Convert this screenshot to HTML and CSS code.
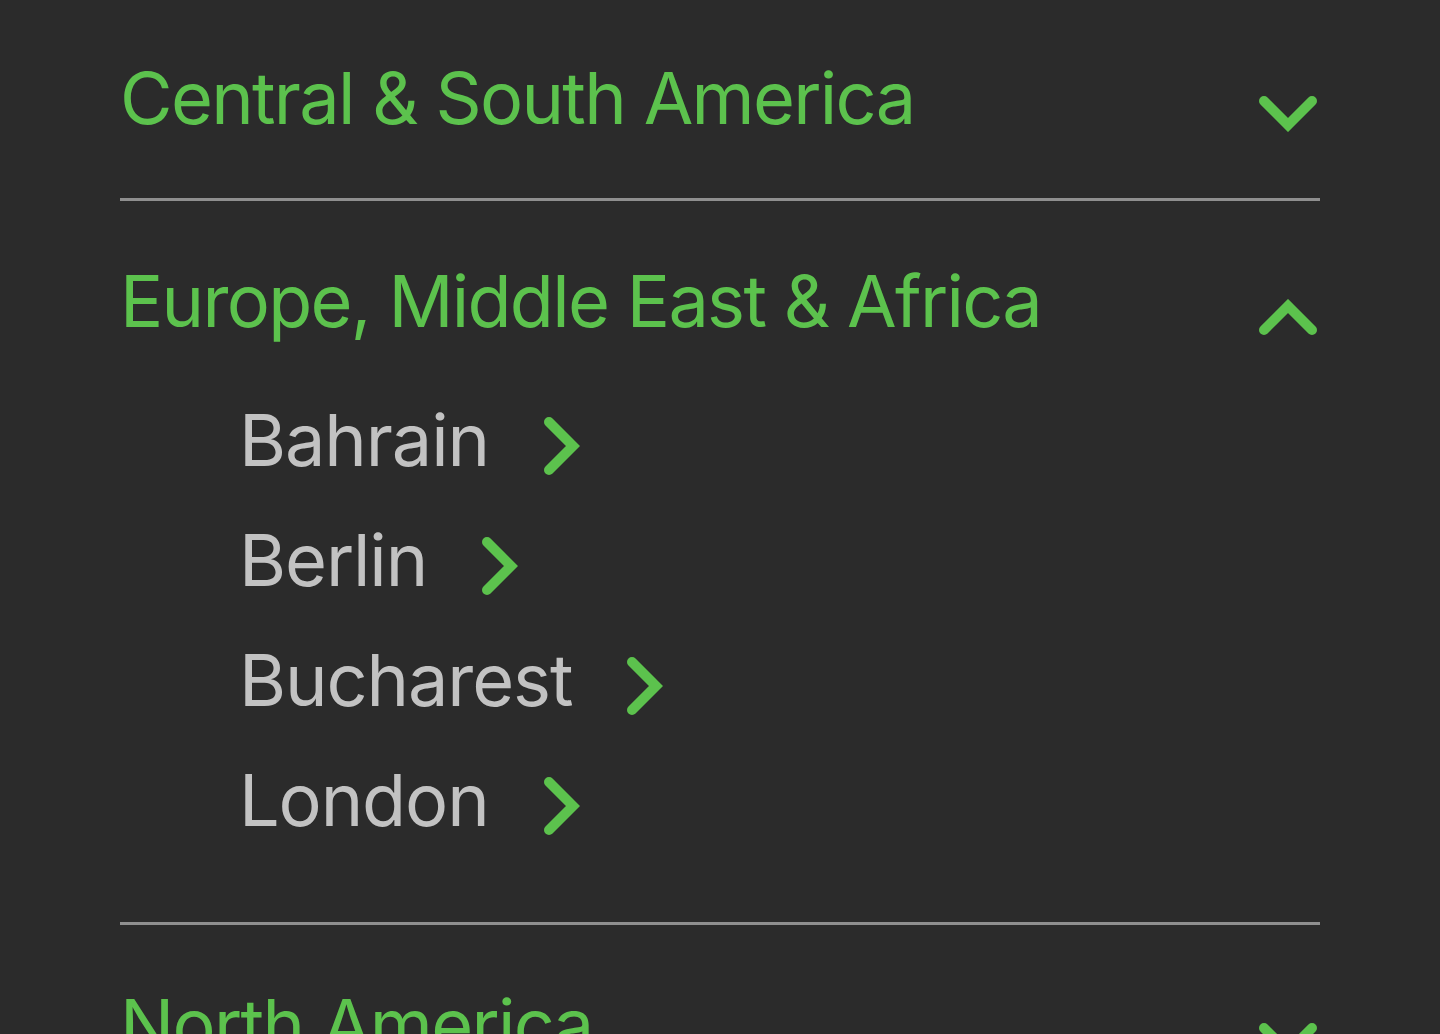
FILE: index.html
```html
<!DOCTYPE html>
<html lang="en">
<head>
<meta charset="utf-8">
<title>Locations</title>
<link rel="stylesheet" href="styles.css">
</head>
<body>
<main class="accordion">
  <section class="region">
    <div class="region-head">
      <h2 class="region-title">Central &amp; South America</h2>
      <svg class="toggle" viewBox="0 0 58 36" width="58" height="36"><polyline points="5,5 29,29 53,5"/></svg>
    </div>
  </section>
  <section class="region open">
    <div class="region-head">
      <h2 class="region-title">Europe, Middle East &amp; Africa</h2>
      <svg class="toggle" viewBox="0 0 58 36" width="58" height="36"><polyline points="5,31 29,7 53,31"/></svg>
    </div>
    <ul class="cities">
      <li class="city"><span class="city-name">Bahrain</span><svg class="go" viewBox="0 0 36 58" width="36" height="58"><polyline points="5,5 29,29 5,53"/></svg></li>
      <li class="city"><span class="city-name">Berlin</span><svg class="go" viewBox="0 0 36 58" width="36" height="58"><polyline points="5,5 29,29 5,53"/></svg></li>
      <li class="city"><span class="city-name">Bucharest</span><svg class="go" viewBox="0 0 36 58" width="36" height="58"><polyline points="5,5 29,29 5,53"/></svg></li>
      <li class="city"><span class="city-name">London</span><svg class="go" viewBox="0 0 36 58" width="36" height="58"><polyline points="5,5 29,29 5,53"/></svg></li>
    </ul>
  </section>
  <section class="region">
    <div class="region-head">
      <h2 class="region-title">North America</h2>
      <svg class="toggle" viewBox="0 0 58 36" width="58" height="36"><polyline points="5,5 29,29 53,5"/></svg>
    </div>
  </section>
</main>
</body>
</html>
```

FILE: styles.css
```css
html, body {
  margin: 0;
  padding: 0;
  background: #2b2b2b;
  height: 100%;
  overflow: hidden;
}

body {
  font-family: Inter, "Noto Sans", sans-serif;
}

.accordion {
  padding: 0 120px;
  margin-top: -2px;
}

.region {
  border-bottom: 3px solid #8f8f8f;
}

.region-head {
  display: flex;
  justify-content: space-between;
  align-items: flex-start;
  padding: 56px 0;
}

.region-title {
  margin: 0;
  font-size: 72px;
  font-weight: 400;
  line-height: 88px;
  letter-spacing: -1.7px;
  color: #5cc24d;
}

.toggle {
  margin-top: 42px;
  margin-right: 3px;
  flex: none;
}

.toggle polyline,
.go polyline {
  fill: none;
  stroke: #5cc24d;
  stroke-width: 10;
  stroke-linecap: round;
  stroke-linejoin: miter;
}

.cities {
  list-style: none;
  margin: -21px 0 0;
  padding: 0 0 62px 119px;
}

.city {
  display: flex;
  align-items: flex-start;
  gap: 55px;
  height: 120px;
}

.city-name {
  font-size: 72px;
  line-height: 120px;
  letter-spacing: -1.1px;
  color: #c2c2c2;
}

.go {
  margin-top: 37px;
  flex: none;
}
```
